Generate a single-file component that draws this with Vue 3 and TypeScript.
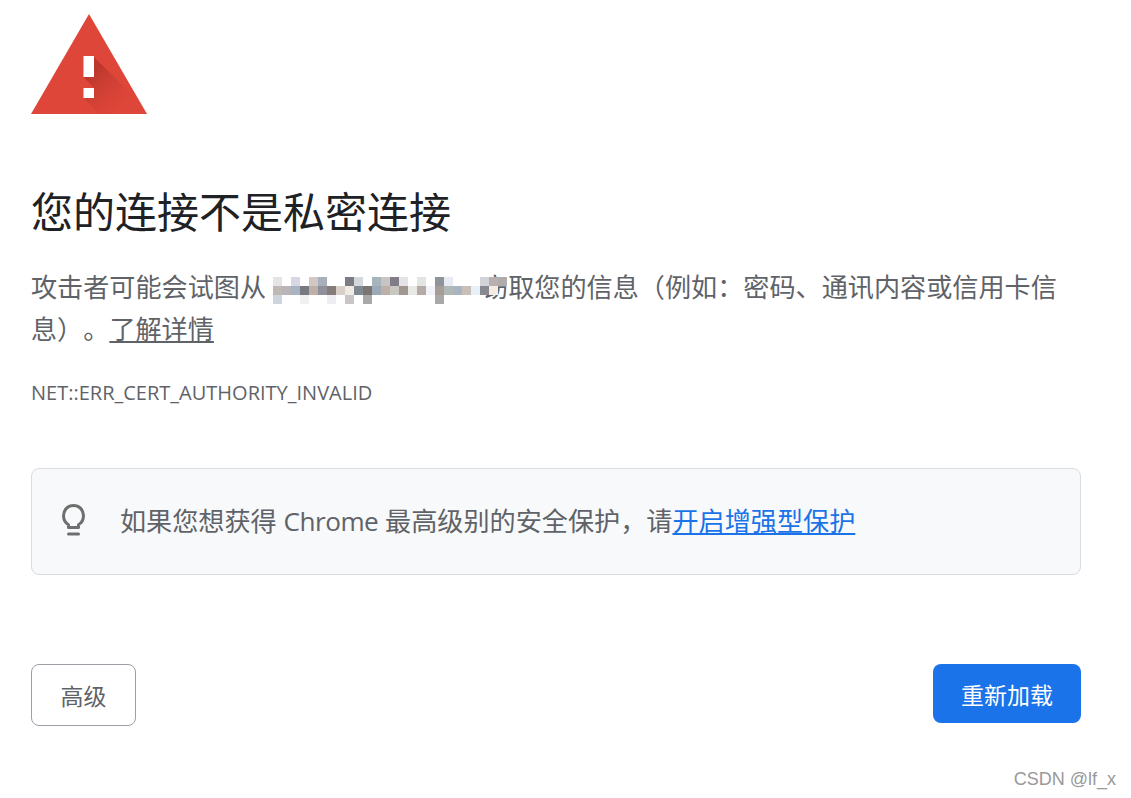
<script setup lang="ts">
// mosaic that hides the host name, one string per row, empty = no cell
const mosaic: string[][] = [
  ['#e5e5e5', '', '#d8d8e4', '', '#d0c8c4', '#a8b0bc', '', '', '#7c7c84', '#d4d8dc', '', '#a8b4bc', '#c8c4c4', '#807c88', '#e4e4e8', '', '#e4e4e2', '', '#909498', '#e8ecf2', '', '', '', '#d0d4d8', '#b8b0b0', '#b0acac'],
  ['#c0b8b4', '#b8b4b8', '#a8b4c4', '#787880', '#bcb0a8', '#90909a', '#887c78', '#d8d0c8', '#f0ece4', '#808890', '#7c7470', '#9caab8', '#bcb0a8', '#c8c8c0', '#a09890', '#e8e8e4', '#b4aca4', '#f0f4f8', '#a89c98', '#b0b8b8', '#a8b4c0', '#c8c0b8', '#e8f0f8', '#888890', '#f4ece0', ''],
  ['#d0d4dc', '', '', '#f0f0f0', '', '', '#ededf2', '', '#c8c4c8', '', '#a8a8a8', '', '', '', '', '', '', '', '#a8a8a8', '', '', '', '', '', '', ''],
]
const cells = mosaic.flat()
</script>

<template>
  <div class="page">
    <svg class="warn" width="116" height="100" viewBox="0 0 116 100">
      <defs>
        <linearGradient id="fold" gradientUnits="userSpaceOnUse" x1="60" y1="60" x2="90" y2="92">
          <stop offset="0" stop-color="#a92f26" stop-opacity="0.65" />
          <stop offset="1" stop-color="#c93c31" stop-opacity="0.03" />
        </linearGradient>
      </defs>
      <path d="M58 0L116 100H0Z" fill="#de4639" />
      <path d="M63 43L99 79L111 100H68L52.5 84H63V74L52.5 63H63Z" fill="url(#fold)" />
      <rect x="52.5" y="42" width="10.5" height="21" fill="#fff" />
      <rect x="52.5" y="74" width="10.5" height="10" fill="#fff" />
    </svg>

    <h1>您的连接不是私密连接</h1>
    <p class="desc">
      攻击者可能会试图从<span class="masked"><span class="mosaic"><i v-for="(c, i) in cells" :key="i" :style="{ background: c || 'transparent' }"></i></span></span>窃取您的信息（例如：密码、通讯内容或信用卡信息）。<a class="learn" href="#">了解详情</a>
    </p>
    <div class="code">NET::ERR_CERT_AUTHORITY_INVALID</div>

    <div class="tip">
      <svg class="bulb" width="28" height="36" viewBox="0 0 28 36" fill="none" stroke="#6f6f6f" stroke-width="3">
        <path d="M8.5 25.5V22.8C5.4 21 3.5 17.6 3.5 13.6C3.5 7.8 7.9 3.5 13.5 3.5S23.5 7.8 23.5 13.6C23.5 17.6 21.6 21 18.5 22.8V25.5Z" stroke-linejoin="round" />
        <path d="M8.5 32H18.5" stroke-linecap="round" />
      </svg>
      <span class="tip-text">如果您想获得 <span class="brand">Chrome</span> 最高级别的安全保护，请<a class="enhanced" href="#">开启增强型保护</a></span>
    </div>

    <div class="actions">
      <button class="advanced">高级</button>
      <button class="reload">重新加载</button>
    </div>
    <div class="mark">CSDN @lf_x</div>
  </div>
</template>

<style>
body {
  background: #fff;
}
</style>

<style scoped>
.page {
  width: 1050px;
  height: 784px;
  padding: 14px 50px 0 31px;
  font-family: "Open Sans", "Noto Sans CJK SC", sans-serif;
  color: #5f6368;
  position: relative;
  text-spacing-trim: space-all;
}

.warn {
  display: block;
}

h1 {
  margin: 68px 0 0;
  font-size: 42px;
  line-height: 60px;
  font-weight: 400;
  color: #202124;
}

.desc {
  margin: 24px 0 0;
  font-size: 26.13px;
  line-height: 42px;
}

.masked {
  display: inline-block;
  width: 216px;
  height: 0;
  position: relative;
}

.mosaic {
  position: absolute;
  left: 7px;
  top: -20px;
  display: grid;
  grid-template-columns: repeat(26, 9px);
  grid-auto-rows: 9px;
}

.mosaic i {
  display: block;
}

.learn {
  color: #5f6368;
  text-decoration: underline;
}

.code {
  margin-top: 31px;
  font-size: 20px;
  line-height: 24px;
}

.tip {
  margin-top: 63px;
  height: 105px;
  padding-left: 28px;
  display: flex;
  align-items: center;
  gap: 32px;
  border: 1px solid #dadce0;
  border-radius: 8px;
  background: #f8f9fa;
  font-size: 26.13px;
}

.tip-text {
  margin-bottom: 3px;
}

.bulb {
  flex: none;
  margin-top: -4px;
}

.brand {
  letter-spacing: -0.5px;
}

.enhanced {
  color: #1a73e8;
  text-decoration: underline;
}

.actions {
  margin-top: 89px;
  display: flex;
  justify-content: space-between;
  align-items: flex-start;
}

button {
  font-family: inherit;
  font-size: 23px;
  border-radius: 8px;
  padding: 0;
}

.advanced {
  width: 105px;
  height: 62px;
  background: #fff;
  border: 1px solid #9aa0a6;
  color: #5f6368;
}

.reload {
  width: 148px;
  height: 59px;
  background: #1a73e8;
  border: none;
  color: #fff;
}

.mark {
  position: absolute;
  right: 15px;
  top: 769px;
  font-family: "Liberation Sans", sans-serif;
  font-size: 18px;
  line-height: 20px;
  color: #999;
}
</style>
